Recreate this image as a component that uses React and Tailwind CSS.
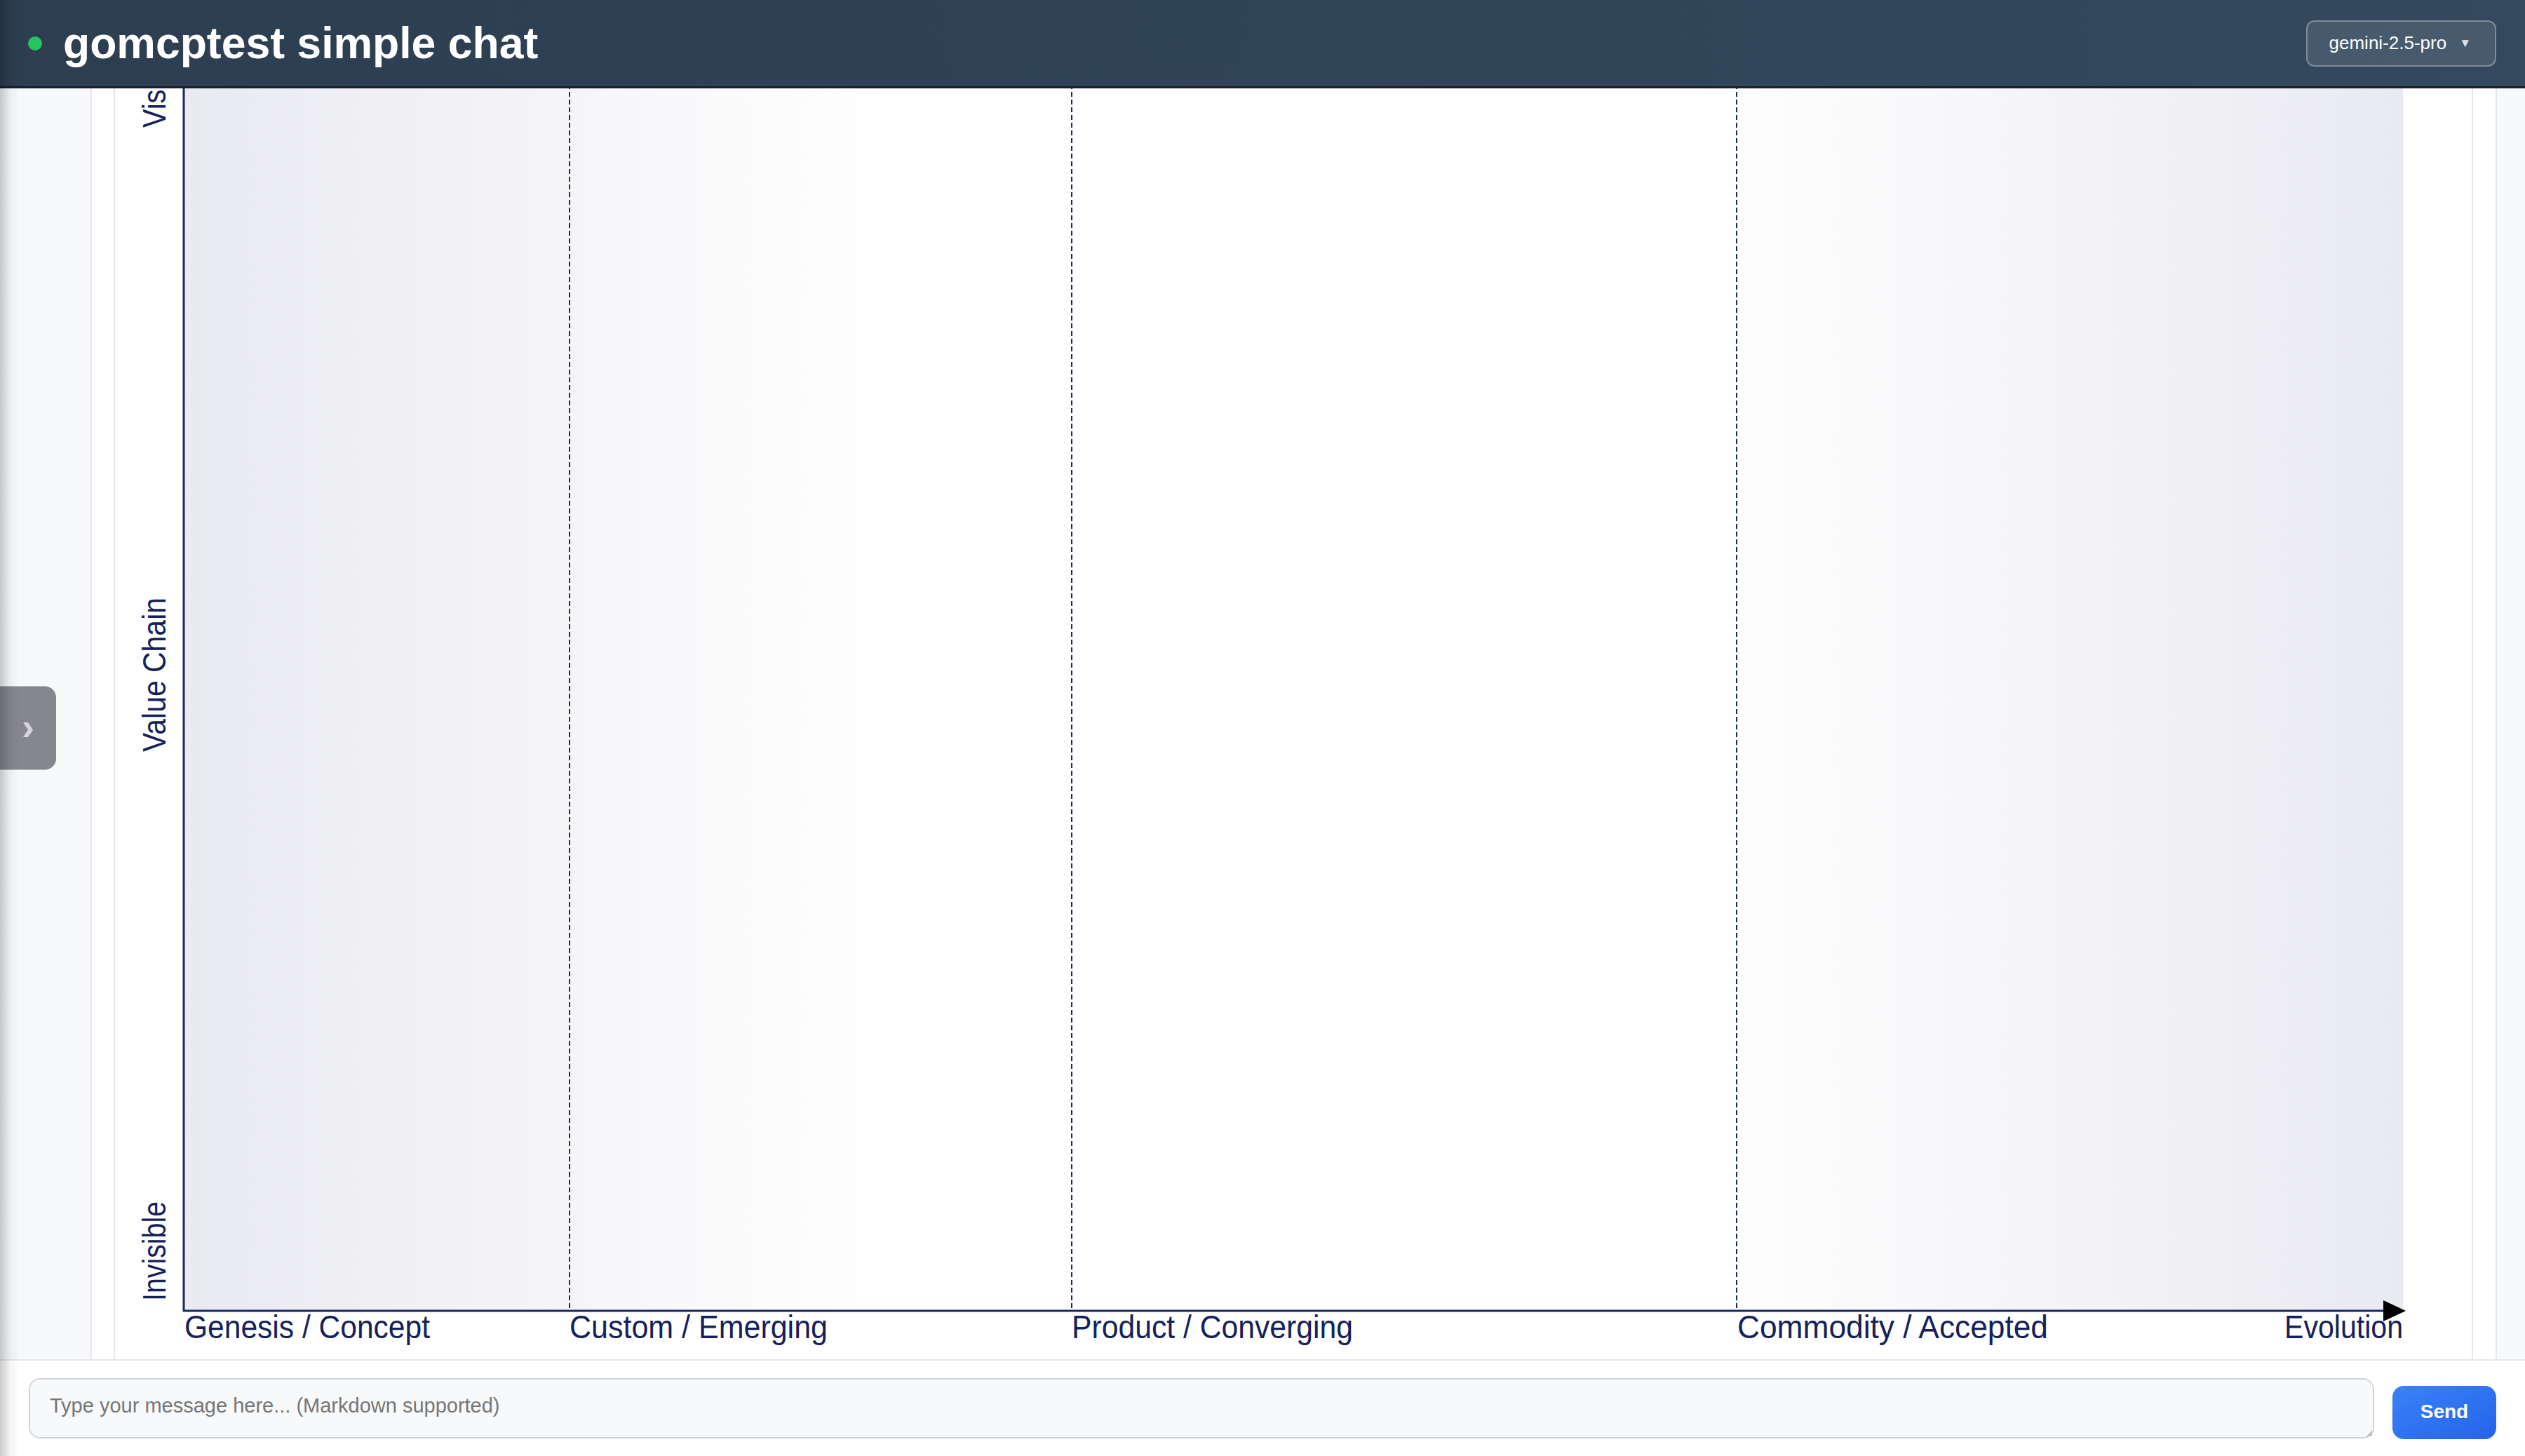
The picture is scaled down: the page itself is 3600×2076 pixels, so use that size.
import React from "react";

const labelColor = "#14215a";
const axisColor = "#1b2a5e";

const xLabels = [
  { text: "Genesis / Concept", x: 99, w: 350 },
  { text: "Custom / Emerging", x: 648, w: 368 },
  { text: "Product / Converging", x: 1364, w: 401 },
  { text: "Commodity / Accepted", x: 2313, w: 443 },
];

const yLabels = [
  { text: "Visible", y: 56, w: 116 },
  { text: "Value Chain", y: 946, w: 220 },
  { text: "Invisible", y: 1729, w: 142 },
];

const stageLines = [648, 1364, 2312];

const WardleyMap = () => (
  <svg width="3360" height="1812" className="block">
    <defs>
      <linearGradient id="wardleyBg" x1="0" y1="0" x2="1" y2="0">
        <stop offset="0%" stopColor="#e9eaf0" />
        <stop offset="32%" stopColor="#ffffff" />
        <stop offset="68%" stopColor="#ffffff" />
        <stop offset="100%" stopColor="#e9eaf0" />
      </linearGradient>
    </defs>
    <rect x="99" y="-600" width="3163" height="2343" fill="url(#wardleyBg)" />

    {stageLines.map((x) => (
      <line
        key={x}
        x1={x}
        y1="-600"
        x2={x}
        y2="1743"
        stroke={axisColor}
        strokeWidth="2"
        strokeDasharray="7 4"
      />
    ))}

    <line x1="98" y1="-600" x2="98" y2="1744" stroke={axisColor} strokeWidth="3" />
    <line x1="97" y1="1743" x2="3236" y2="1743" stroke={axisColor} strokeWidth="3" />
    <polygon points="3234,1728 3266,1743 3234,1758" fill="#000" />

    {xLabels.map((l) => (
      <text
        key={l.text}
        x={l.x}
        y="1782"
        fontSize="46"
        fill={labelColor}
        fontFamily="'Liberation Sans', Arial, sans-serif"
        textLength={l.w}
        lengthAdjust="spacingAndGlyphs"
      >
        {l.text}
      </text>
    ))}
    <text
      x="3262"
      y="1782"
      fontSize="46"
      fill={labelColor}
      textAnchor="end"
      fontFamily="'Liberation Sans', Arial, sans-serif"
      textLength="169"
      lengthAdjust="spacingAndGlyphs"
    >
      Evolution
    </text>

    {yLabels.map((l) => (
      <text
        key={l.text}
        x="72"
        y={l.y}
        transform={`rotate(-90 72 ${l.y})`}
        fontSize="46"
        fill={labelColor}
        fontFamily="'Liberation Sans', Arial, sans-serif"
        textLength={l.w}
        lengthAdjust="spacingAndGlyphs"
      >
        {l.text}
      </text>
    ))}
  </svg>
);

export default function App() {
  return (
    <div className="relative h-screen w-full flex flex-col overflow-hidden bg-white font-['Liberation_Sans',Arial,sans-serif]">
      <header className="h-[126px] shrink-0 flex items-center justify-between pl-[40px] pr-[41px] bg-gradient-to-r from-[#2c3e50] to-[#34495e] border-b-[3px] border-[#1b1c2e]">
        <div className="flex items-center gap-[30px]">
          <span className="w-[20px] h-[20px] rounded-full bg-[#22c55e]" />
          <h1 className="text-[62.5px] font-bold text-white leading-none whitespace-nowrap">
            gomcptest simple chat
          </h1>
        </div>
        <button className="h-[66px] flex items-center whitespace-nowrap pl-[31px] pr-[34px] gap-[18px] rounded-[12px] border-2 border-white/30 bg-white/10 text-white text-[26px]">
          <span>gemini-2.5-pro</span>
          <span className="text-[17px] text-[#dde1e6]">▼</span>
        </button>
      </header>

      <main className="flex-1 min-h-0 overflow-hidden bg-[#f7f8fa] pl-[129px] pr-[40px]">
        <div className="h-full bg-white border-x-2 border-[#e5e7eb] pl-[31px] pr-[32px]">
          <div className="h-full bg-white border-x-2 border-[#e5e7eb] overflow-hidden">
            <WardleyMap />
          </div>
        </div>
      </main>

      <footer className="h-[138px] shrink-0 bg-white border-t-2 border-[#e5e7eb] flex items-end gap-[26px] px-[41px] pb-[25px]">
        <textarea
          rows={1}
          placeholder="Type your message here... (Markdown supported)"
          className="flex-1 h-[86px] rounded-[16px] border-2 border-[#d1d5db] bg-[#f8f9fa] px-[28px] pt-[16px] pb-[24px] text-[29px] leading-[42px] text-[#333] placeholder:text-[#767676] outline-none"
        />
        <button className="w-[148px] h-[76px] mb-[-1px] rounded-[16px] bg-gradient-to-br from-[#3b82f6] to-[#2563eb] text-white text-[28px] font-bold pb-[2px]">
          Send
        </button>
      </footer>

      <button className="absolute left-0 top-1/2 -translate-y-1/2 w-[80px] h-[119px] rounded-r-[16px] bg-[#86868f] text-[#d4d4da] text-[54px] font-bold leading-none flex items-center justify-center pb-[6px]">
        ›
      </button>
      <div className="pointer-events-none absolute left-0 top-0 h-full w-[28px] bg-gradient-to-r from-black/20 via-black/5 to-transparent" />
    </div>
  );
}
